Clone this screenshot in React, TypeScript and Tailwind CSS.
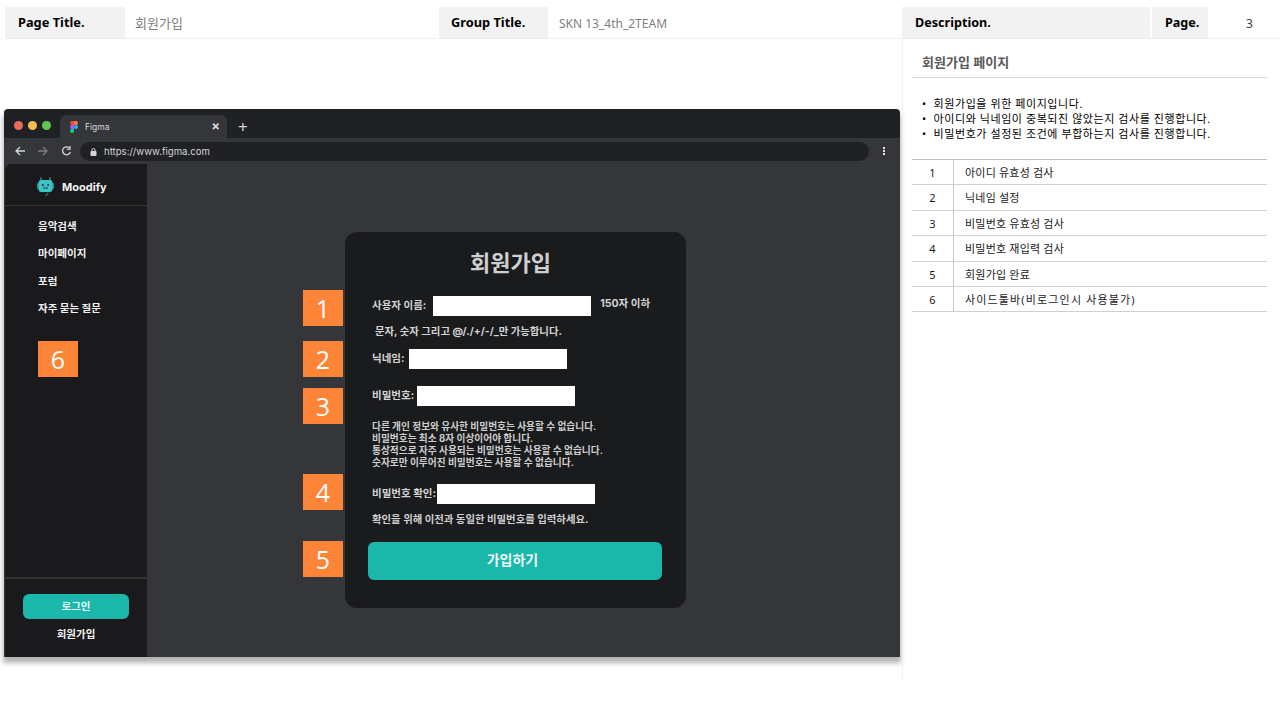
import React from "react";

const kr = "font-['Noto_Sans','Noto_Sans_CJK_KR',sans-serif]";
const ui = "font-['Inter','Noto_Sans_CJK_KR',sans-serif]";

function Badge({ n, className }: { n: number; className: string }) {
  return (
    <div className={`absolute w-10 h-9 bg-[#fe8438] text-white text-[25px] leading-9 text-center font-['Open_Sans',sans-serif] ${className}`}>
      {n}
    </div>
  );
}

function Figma() {
  return (
    <svg width="8" height="12" viewBox="0 0 8 12">
      <path d="M0 2a2 2 0 0 1 2-2h2v4H2a2 2 0 0 1-2-2z" fill="#f24e1e" />
      <path d="M4 0h2a2 2 0 0 1 0 4H4z" fill="#ff7262" />
      <path d="M0 6a2 2 0 0 1 2-2h2v4H2a2 2 0 0 1-2-2z" fill="#a259ff" />
      <circle cx="6" cy="6" r="2" fill="#1abcfe" />
      <path d="M0 10a2 2 0 0 1 2-2h2v2a2 2 0 0 1-4 0z" fill="#0acf83" />
    </svg>
  );
}

function Robot() {
  return (
    <svg width="17" height="20" viewBox="0 0 17 20">
      <path d="M4 3V1M13 3V1" stroke="#3f8f93" strokeWidth="1.4" strokeLinecap="round" />
      <rect x="0" y="6" width="2" height="6" rx="1" fill="#2b8f92" />
      <rect x="15" y="6" width="2" height="6" rx="1" fill="#2b8f92" />
      <rect x="1.5" y="3" width="14" height="12" rx="3" fill="#3cc4c6" />
      <circle cx="5.8" cy="8" r="1.1" fill="#17393c" />
      <circle cx="11.2" cy="8" r="1.1" fill="#17393c" />
      <path d="M6.5 11h4" stroke="#17393c" strokeWidth="1" strokeLinecap="round" />
      <path d="M11 15.5c0 2-1.5 3-3 2.6" stroke="#2b6f72" strokeWidth="1.2" fill="none" />
    </svg>
  );
}

function Field({ label, gap, children }: { label: string; gap: string; children?: React.ReactNode }) {
  return (
    <div className="flex items-center h-5 pl-[27px]">
      <span className="text-[10.5px] font-bold text-[#d4d4d4] whitespace-nowrap">{label}</span>
      <span className={`block w-[158px] h-5 bg-white ${gap}`} />
      {children}
    </div>
  );
}

const rows: [string, string][] = [
  ["아이디 유효성 검사", "tracking-[0.2px]"],
  ["닉네임 설정", "tracking-[0.2px]"],
  ["비밀번호 유효성 검사", "tracking-[0.2px]"],
  ["비밀번호 재입력 검사", "tracking-[0.2px]"],
  ["회원가입 완료", "tracking-[0.2px]"],
  ["사이드툴바(비로그인시 사용불가)", "tracking-[1.15px]"],
];

const menu = ["음악검색", "마이페이지", "포럼", "자주 묻는 질문"];

export default function App() {
  return (
    <div className={`relative w-[1280px] h-[720px] bg-white overflow-hidden ${kr}`}>
      <header className="flex h-[39px] ml-[5px] pt-[7px] border-b border-[#eeeeee]">
        <div className="w-[120px] bg-[#f2f2f2] pl-[13px] text-[12.8px] leading-[31px] font-bold text-black">Page Title.</div>
        <div className="w-[314px] pl-[10px] text-[13px] leading-[32px] text-[#7f7f7f]">회원가입</div>
        <div className="w-[109px] bg-[#f2f2f2] pl-[12px] text-[12.8px] leading-[31px] font-bold text-black">Group Title.</div>
        <div className="w-[354px] pl-[11px] text-[12px] leading-[33px] text-[#7f7f7f]">SKN 13_4th_2TEAM</div>
        <div className="w-[248px] bg-[#f2f2f2] pl-[13px] text-[12.6px] leading-[31px] font-bold text-black">Description.</div>
        <div className="w-[56px] ml-[2px] bg-[#f2f2f2] pl-[13px] text-[12.6px] leading-[31px] font-bold text-black">Page.</div>
        <div className="w-[66px] pl-[38px] text-[12px] leading-[33px] text-[#404040]">3</div>
      </header>

      <div className="flex h-[641px]">
        {/* left: browser window */}
        <div className="w-[901px] pt-[70px] pl-[4px] shrink-0">
          <div className="w-[896px] h-[548px] flex flex-col rounded-t-[4px] overflow-hidden bg-[#202124] shadow-[0_5px_5px_1px_rgba(0,0,0,0.3)]">
            <div className="h-[29px] shrink-0 flex items-end">
              <div className="flex gap-[5px] pl-[10px] pb-[8px] w-[56px]">
                <span className="w-[9px] h-[9px] rounded-full bg-[#ed6a5e]" />
                <span className="w-[9px] h-[9px] rounded-full bg-[#f4bf4f]" />
                <span className="w-[9px] h-[9px] rounded-full bg-[#61c554]" />
              </div>
              <div className={`w-[167px] h-[23px] bg-[#35363a] rounded-t-[6px] flex items-center pl-[10px] pr-[7px] ${ui}`}>
                <Figma />
                <span className="ml-[7px] pt-[1px] text-[8.5px] text-[#d5d6d8]">Figma</span>
                <span className="ml-auto text-[13px] font-bold text-[#d5d6d8]">×</span>
              </div>
              <span className="ml-[11px] pb-[1px] text-[17px] leading-[20px] text-[#d5d6d8]">+</span>
            </div>
            <div className={`h-[26px] shrink-0 bg-[#35363a] flex items-center ${ui}`}>
              <svg className="ml-[11px]" width="60" height="12" viewBox="0 0 60 12" fill="none" strokeWidth="1.3">
                <path d="M1 6h9M5 2 1 6l4 4" stroke="#d5d6d8" />
                <path d="M23 6h9M28 2l4 4-4 4" stroke="#7d7e82" />
                <path d="M54 2.6a4 4 0 1 0 1.4 4.4M55 1v3.2h-3.2" stroke="#d5d6d8" />
              </svg>
              <div className="ml-[5px] mt-[1px] w-[789px] h-[19px] rounded-full bg-[#202124] flex items-center pl-[10px]">
                <svg width="7" height="8" viewBox="0 0 7 8">
                  <rect x="0.5" y="3" width="6" height="5" rx="1" fill="#d5d6d8" />
                  <path d="M2 3V2a1.5 1.5 0 0 1 3 0v1" stroke="#d5d6d8" fill="none" />
                </svg>
                <span className="ml-[7px] pt-[1px] text-[9.6px] text-[#d5d6d8]">https://www.figma.com</span>
              </div>
              <span className="ml-[14px] flex flex-col gap-[1px]">
                <i className="block w-[2px] h-[2px] bg-[#e5e5e5]" />
                <i className="block w-[2px] h-[2px] bg-[#e5e5e5]" />
                <i className="block w-[2px] h-[2px] bg-[#e5e5e5]" />
              </span>
            </div>
            <div className="flex-1 flex min-h-0 bg-[#35363a]">
              <aside className={`w-[142px] ml-[1px] bg-[#1a191b] flex flex-col rounded-tl-[6px] ${ui}`}>
                <div className="h-[42px] shrink-0 border-b border-[#343334] flex items-center pl-[32px] pt-[5px] gap-[8px]">
                  <Robot />
                  <span className="text-[11px] font-bold text-[#f2f2f2]">Moodify</span>
                </div>
                <nav className="pl-[33px] pt-[7px] flex-1">
                  {menu.map((m) => (
                    <div key={m} className="h-[27.3px] text-[10.5px] leading-[27px] font-bold text-[#f2f2f2]">{m}</div>
                  ))}
                </nav>
                <div className="h-[80px] shrink-0 border-t-2 border-[#343334] pt-[15px] flex flex-col items-center">
                  <div className="w-[106px] h-[25px] rounded-[6px] bg-[#1ab7aa] text-[10.5px] leading-[25px] font-bold text-center text-[#e8f8f6]">로그인</div>
                  <div className="mt-[8px] text-[10.5px] font-bold text-[#f2f2f2]">회원가입</div>
                </div>
              </aside>
              <main className="flex-1 pt-[68px] pl-[198px]">
                <div className={`w-[341px] h-[376px] rounded-[12px] bg-[#1a1b1d] pt-[13px] ${ui}`}>
                  <h1 className="pr-[10px] text-center text-[22px] leading-[36px] font-bold text-[#cfcfcf]">회원가입</h1>
                  <div className="mt-[15px]">
                    <Field label="사용자 이름:" gap="ml-[7px]">
                      <span className="ml-[9px] -mt-[5px] text-[10.5px] font-bold text-[#d4d4d4] whitespace-nowrap">150자 이하</span>
                    </Field>
                  </div>
                  <p className="mt-[9px] pl-[30px] text-[10.4px] leading-[14px] font-bold text-[#d4d4d4]">문자, 숫자 그리고 @/./+/-/_만 가능합니다.</p>
                  <div className="mt-[10px]"><Field label="닉네임:" gap="ml-[4px]" /></div>
                  <div className="mt-[17px]"><Field label="비밀번호:" gap="ml-[3px]" /></div>
                  <div className="mt-[15px] pl-[27px] text-[9.7px] leading-[12px] font-bold text-[#cfcfcf]">
                    <p>다른 개인 정보와 유사한 비밀번호는 사용할 수 없습니다.</p>
                    <p>비밀번호는 최소 8자 이상이어야 합니다.</p>
                    <p>통상적으로 자주 사용되는 비밀번호는 사용할 수 없습니다.</p>
                    <p>숫자로만 이루어진 비밀번호는 사용할 수 없습니다.</p>
                  </div>
                  <div className="mt-[15px]"><Field label="비밀번호 확인:" gap="ml-[1px]" /></div>
                  <p className="mt-[9px] pl-[27px] text-[10.4px] leading-[14px] font-bold text-[#cfcfcf]">확인을 위해 이전과 동일한 비밀번호를 입력하세요.</p>
                  <div className="mt-[15px] ml-[23px] w-[294px] h-[38px] pr-[5px] rounded-[6px] bg-[#1ab7aa] text-center text-[14px] leading-[35px] font-bold text-[#eef7f6]">가입하기</div>
                </div>
              </main>
            </div>
          </div>
        </div>

        {/* right: description */}
        <div className="ml-[1px] w-[377px] border-l border-[#f2f2f2] pt-[13px] h-[641px]">
          <div className="ml-[9px] w-[355px]">
            <div className="h-[26px] border-b border-[#d9d9d9] pl-[10px] text-[13px] leading-[21px] font-bold text-[#595959]">회원가입 페이지</div>
            <ul className="pt-[18px] h-[82px] border-b border-[#bfbfbf] pl-[10px] text-[11px] tracking-[0.57px] leading-[15px] text-black">
              <li>•&nbsp;&nbsp;회원가입을 위한 페이지입니다.</li>
              <li>•&nbsp;&nbsp;아이디와 닉네임이 중복되진 않았는지 검사를 진행합니다.</li>
              <li>•&nbsp;&nbsp;비밀번호가 설정된 조건에 부합하는지 검사를 진행합니다.</li>
            </ul>
            {rows.map(([r, t], i) => (
              <div key={r} className="flex h-[25.4px] border-b border-[#d0d0d0] text-[11px] leading-[25px] text-[#1a1a1a]">
                <div className="w-[42px] border-r border-[#c8c8c8] text-center">{i + 1}</div>
                <div className={`pl-[11px] ${t}`}>{r}</div>
              </div>
            ))}
          </div>
        </div>
      </div>

      <Badge n={1} className="left-[303px] top-[290px]" />
      <Badge n={2} className="left-[303px] top-[341px]" />
      <Badge n={3} className="left-[303px] top-[388px]" />
      <Badge n={4} className="left-[303px] top-[474px]" />
      <Badge n={5} className="left-[303px] top-[541px]" />
      <Badge n={6} className="left-[38px] top-[341px]" />
    </div>
  );
}
